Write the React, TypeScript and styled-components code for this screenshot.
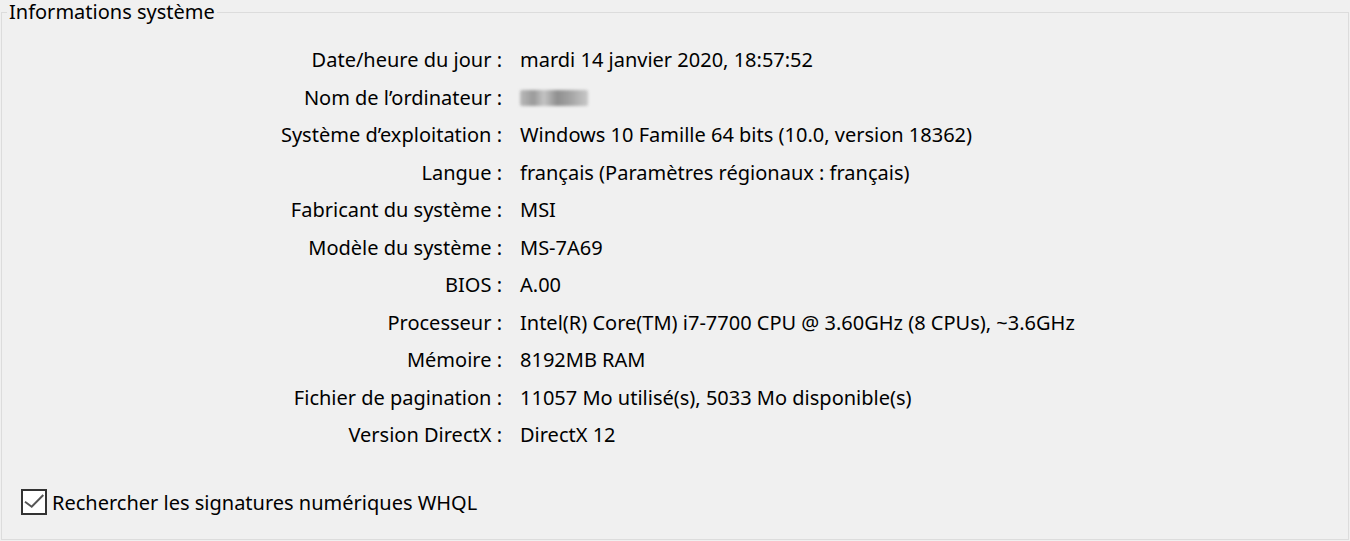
import React from "react";
import styled, { createGlobalStyle } from "styled-components";

const GlobalStyle = createGlobalStyle`
  html, body {
    margin: 0;
    padding: 0;
    background: #f0f0f0;
  }
  body {
    font-family: "Noto Sans", "Open Sans", sans-serif;
    color: #000;
  }
`;

const Page = styled.div`
  width: 1350px;
  height: 541px;
  box-sizing: border-box;
  padding: 0 1px 1px 1px;
  background: #f0f0f0;
`;

const Group = styled.fieldset`
  margin: 0;
  padding: 0;
  height: 540px;
  box-sizing: border-box;
  border: 1px solid #dcdcdc;
  display: flex;
  flex-direction: column;
  min-width: 0;
`;

const Legend = styled.legend`
  margin-left: 5px;
  padding: 0 2px;
  font-size: 20px;
  line-height: 24px;
  height: 24px;
`;

const InfoGrid = styled.div`
  display: grid;
  grid-template-columns: 500px auto;
  column-gap: 18px;
  grid-auto-rows: 37.5px;
  margin-top: 17.25px;
  font-size: 20px;
  line-height: 37.5px;
`;

const Label = styled.div`
  text-align: right;
  white-space: nowrap;
`;

const Value = styled.div`
  white-space: nowrap;
`;

const Blurred = styled.span`
  display: inline-block;
  width: 68px;
  height: 16px;
  vertical-align: middle;
  border-radius: 2px;
  background: linear-gradient(90deg, #b9b9b9, #9a9a9a 20%, #c4c4c4 35%, #8f8f8f 55%, #a5a5a5 75%, #c8c8c8);
  filter: blur(1.5px);
  margin-top: -3px;
`;

const CheckRow = styled.label`
  display: flex;
  align-items: center;
  gap: 5px;
  height: 37.5px;
  margin-top: 29.5px;
  padding-left: 19px;
  font-size: 20px;
`;

const Box = styled.span`
  width: 26px;
  height: 26px;
  box-sizing: border-box;
  border: 2px solid #333;
  background: #fff;
  display: flex;
  align-items: center;
  justify-content: center;
`;

const rows: [string, React.ReactNode][] = [
  ["Date/heure du jour :", "mardi 14 janvier 2020, 18:57:52"],
  ["Nom de l\u2019ordinateur :", <Blurred key="b" />],
  ["Système d\u2019exploitation :", "Windows 10 Famille 64 bits (10.0, version 18362)"],
  ["Langue :", "français (Paramètres régionaux : français)"],
  ["Fabricant du système :", "MSI"],
  ["Modèle du système :", "MS-7A69"],
  ["BIOS :", "A.00"],
  ["Processeur :", "Intel(R) Core(TM) i7-7700 CPU @ 3.60GHz (8 CPUs), ~3.6GHz"],
  ["Mémoire :", "8192MB RAM"],
  ["Fichier de pagination :", "11057 Mo utilisé(s), 5033 Mo disponible(s)"],
  ["Version DirectX :", "DirectX 12"],
];

export default function App() {
  return (
    <Page>
      <GlobalStyle />
      <Group>
        <Legend>Informations système</Legend>
        <InfoGrid>
          {rows.map(([l, v], i) => (
            <React.Fragment key={i}>
              <Label>{l}</Label>
              <Value>{v}</Value>
            </React.Fragment>
          ))}
        </InfoGrid>
        <CheckRow>
          <Box>
            <svg width="22" height="22" viewBox="0 0 22 22">
              <polyline points="2,10.7 8.7,15.7 20.3,4" fill="none" stroke="#555" strokeWidth="2" />
            </svg>
          </Box>
          Rechercher les signatures numériques WHQL
        </CheckRow>
      </Group>
    </Page>
  );
}
